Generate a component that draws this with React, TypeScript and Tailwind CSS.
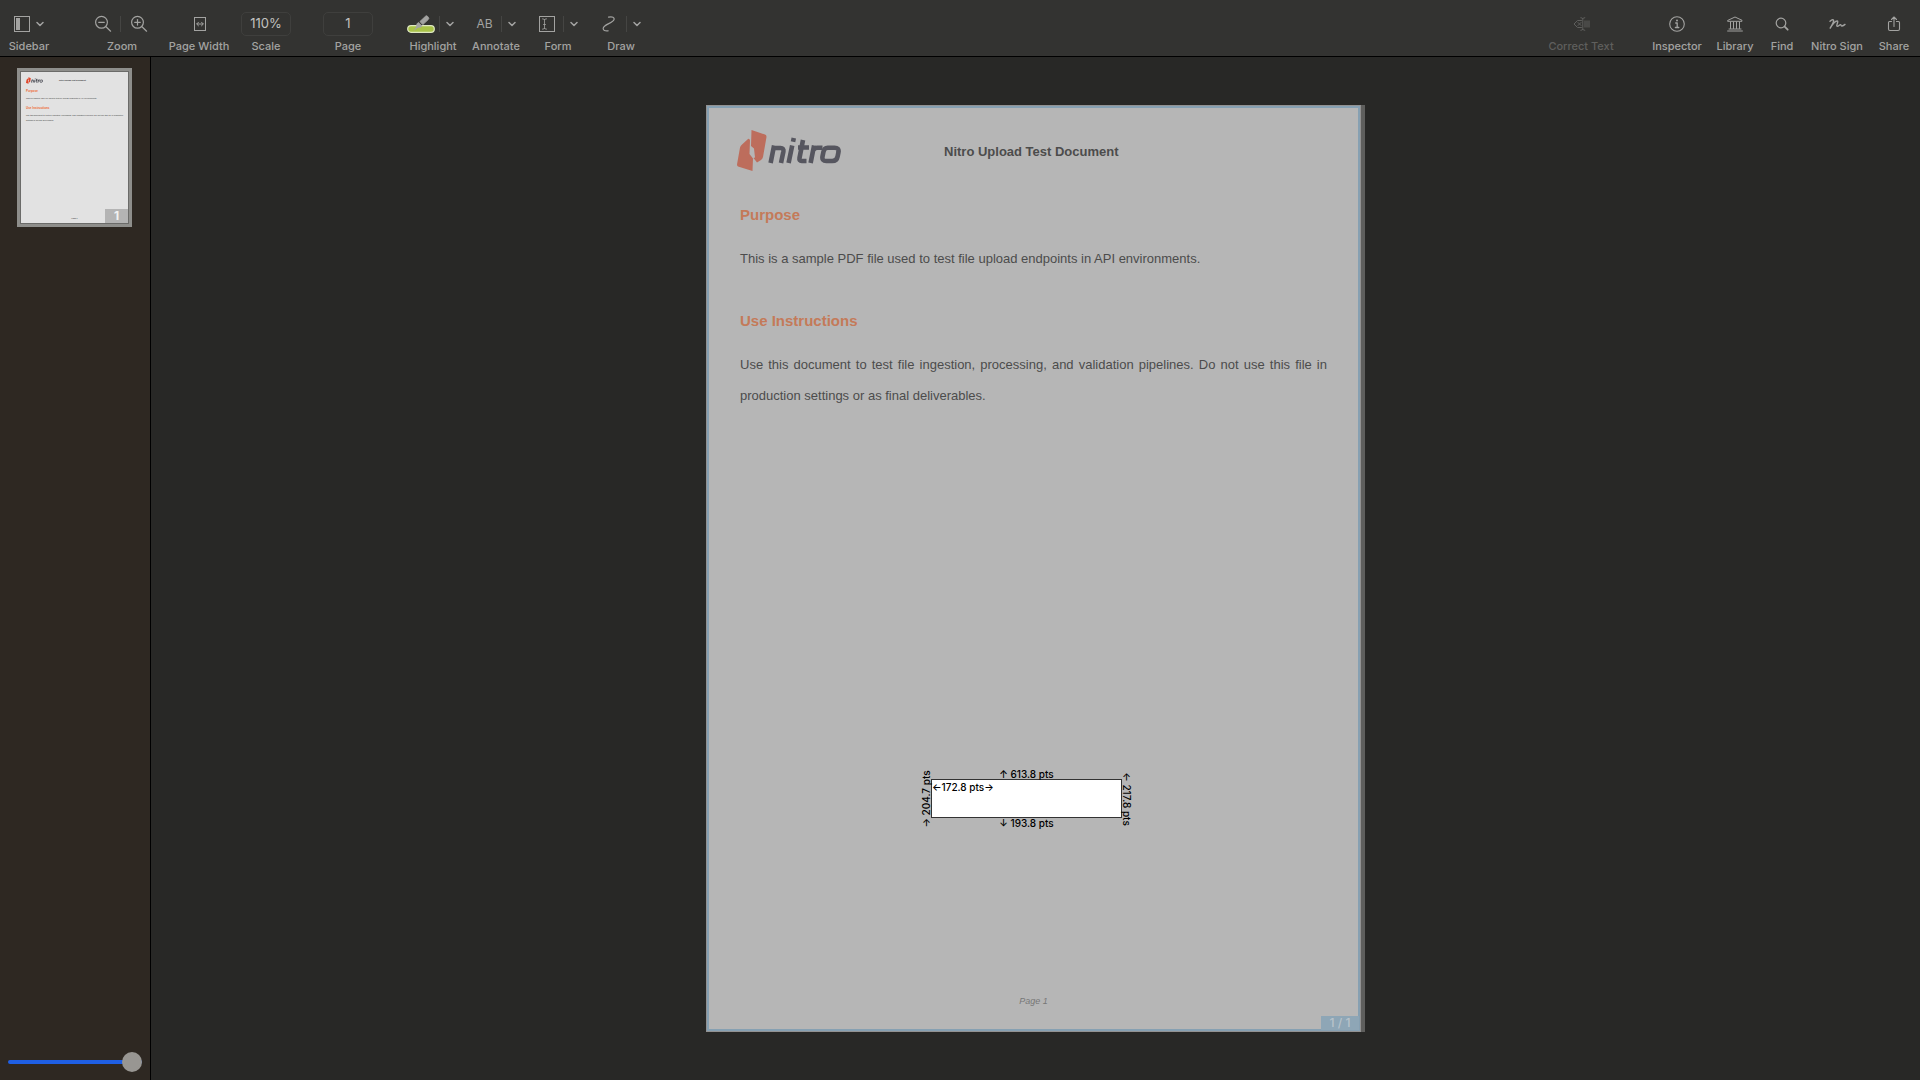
import React from "react";

type ToolProps = { label: string; className: string; children: React.ReactNode; dim?: boolean };

const stroke = {
  fill: "none",
  stroke: "currentColor",
  strokeWidth: 1,
  strokeLinecap: "round" as const,
  strokeLinejoin: "round" as const,
};

function Tool({ label, className, children, dim }: ToolProps) {
  return (
    <div
      role="group"
      aria-label={label}
      className={`flex shrink-0 flex-col items-center gap-1 ${dim ? "text-[#5f5f5d]" : "text-[#a3a3a1]"} ${className}`}
    >
      <div className="flex h-6 items-center justify-center">{children}</div>
      <span className="whitespace-nowrap text-[11px] leading-3 font-medium">{label}</span>
    </div>
  );
}

function IconButton({ label, children, disabled }: { label: string; children: React.ReactNode; disabled?: boolean }) {
  return (
    <button type="button" aria-label={label} disabled={disabled} className="flex items-center justify-center">
      {children}
    </button>
  );
}

function Chevron({ label }: { label: string }) {
  return (
    <IconButton label={label}>
      <svg width="8" height="8" viewBox="0 0 8 8" {...stroke} strokeWidth={1.5}>
        <path d="M1 2.5 4 5.5 7 2.5" />
      </svg>
    </IconButton>
  );
}

function Divider({ className }: { className: string }) {
  return <span className={`h-4 w-px bg-[#454543] ${className}`} />;
}

function ZoomGlyph({ plus }: { plus?: boolean }) {
  return (
    <svg width="18" height="18" viewBox="0 0 18 18" {...stroke} strokeWidth={1.2}>
      <circle cx="7.5" cy="7.3" r="5.9" />
      <path d="M12 11.8 16.6 16.2M4.7 7.3h5.6" />
      {plus && <path d="M7.5 4.5v5.6" />}
    </svg>
  );
}

function NumberBox({ id, label, value }: { id: string; label: string; value: string }) {
  return (
    <div className="flex w-[50px] shrink-0 flex-col items-center gap-1 text-[#a3a3a1]">
      <input
        id={id}
        defaultValue={value}
        className="h-6 w-full rounded-[5px] border border-[#3f3f3d] bg-transparent pb-0.5 text-center text-[13px] text-[#c2c2c0] outline-none"
      />
      <label htmlFor={id} className="text-[11px] leading-3 font-medium">
        {label}
      </label>
    </div>
  );
}

function Toolbar() {
  return (
    <header className="flex h-[57px] shrink-0 items-start justify-between border-b border-black bg-[#333331] pt-3">
      <div className="flex">
        <Tool label="Sidebar" className="w-[58px]">
          <IconButton label="Toggle sidebar">
            <svg width="16" height="16" viewBox="0 0 16 16" {...stroke} strokeLinejoin="miter">
              <rect x="0.5" y="0.5" width="15" height="15" />
              <rect x="2" y="2" width="4" height="12" fill="currentColor" stroke="none" />
            </svg>
          </IconButton>
          <span className="w-1.5" />
          <Chevron label="Sidebar options" />
        </Tool>
        <Tool label="Zoom" className="ml-[34px] w-[60px]">
          <IconButton label="Zoom out">
            <ZoomGlyph />
          </IconButton>
          <Divider className="mr-[9px] ml-2" />
          <IconButton label="Zoom in">
            <ZoomGlyph plus />
          </IconButton>
          <span className="w-0.5" />
        </Tool>
        <Tool label="Page Width" className="ml-3.5 w-[66px]">
          <IconButton label="Fit page width">
            <span className="w-0.5" />
            <svg width="12" height="14" viewBox="0 0 12 14" {...stroke} strokeLinejoin="miter">
              <rect x="0.5" y="0.5" width="11" height="13" />
              <path d="M3 7h6M4.5 5.2 2.7 7l1.8 1.8M7.5 5.2 9.3 7 7.5 8.8" />
            </svg>
          </IconButton>
        </Tool>
        <div className="ml-[9px] flex gap-8">
          <NumberBox id="scale" label="Scale" value="110%" />
          <NumberBox id="page" label="Page" value="1" />
        </div>
        <Tool label="Highlight" className="ml-[33px] w-[54px]">
          <IconButton label="Highlight">
            <svg width="28" height="18" viewBox="0 0 28 18">
              <rect x="0.7" y="10.7" width="26.6" height="6.6" rx="3.3" fill="#a9c348" stroke="#dfe8c0" strokeWidth="1.2" />
              <path d="M13 6.5 18.6 1.2q1-.8 2 .2l.8 1q.8 1-.1 2L15.8 9.6z" fill="#a3a3a1" stroke="#a3a3a1" />
              <path d="M11.500 7 15.500 11 13.500 12.500 11 12.800 6.500 16 9.200 12 9.400 9z" fill="#a3a3a1" />
            </svg>
          </IconButton>
          <Divider className="mr-1.5 ml-1" />
          <Chevron label="Highlight options" />
          <span className="w-1.5" />
        </Tool>
        <Tool label="Annotate" className="ml-2.5 w-[52px]">
          <button type="button" className="text-[12px] leading-4">
            AB
          </button>
          <Divider className="mr-1.5 ml-2" />
          <Chevron label="Annotate options" />
        </Tool>
        <Tool label="Form" className="ml-3 w-12">
          <IconButton label="Form">
            <svg width="16" height="16" viewBox="0 0 16 16" {...stroke} strokeLinejoin="miter">
              <rect x="0.5" y="0.5" width="15" height="15" />
              <path d="M5.5 3.5v9M3.5 2.8q2 0 2 1.2 0-1.2 2-1.2M3.5 13.2q2 0 2-1.2 0 1.2 2 1.2M4.5 8.5h2" strokeWidth={0.8} />
            </svg>
          </IconButton>
          <Divider className="mr-1.5 ml-2" />
          <Chevron label="Form options" />
        </Tool>
        <Tool label="Draw" className="ml-3.5 w-[50px]">
          <IconButton label="Draw">
            <svg width="14" height="16" viewBox="0 0 14 16" {...stroke} strokeWidth={1.2}>
              <path d="M6.5 1.2C10.5.2 12.6 1.6 12 3.6 11 7 1.500 8.500 1.200 12.200c-.2 2.200 2 3.100 5 2.600" />
            </svg>
          </IconButton>
          <Divider className="mr-1.5 ml-2.5" />
          <Chevron label="Draw options" />
        </Tool>
      </div>

      <div className="flex pr-2.5">
        <Tool label="Correct Text" className="mr-[37px] w-[66px]" dim>
          <IconButton label="Correct Text" disabled>
            <span className="w-0.5" />
            <svg width="18" height="14" viewBox="0 0 18 14" {...stroke}>
              <path d="M8.5 3.5H4.5L1 7l3.5 3.5h4M5 5.5 8 8.5M8 5.5l-3 3M7.8.7q2 0 2 1.3 0-1.3 2-1.3M9.8 2v10M7.8 13.3q2 0 2-1.3 0 1.3 2 1.3" />
              <path d="M11 3.5h6v7h-6z" fill="currentColor" fillOpacity={0.5} stroke="none" />
            </svg>
          </IconButton>
        </Tool>
        <Tool label="Inspector" className="mr-[13px] w-[52px]">
          <IconButton label="Inspector">
            <svg width="16" height="16" viewBox="0 0 16 16" {...stroke} strokeWidth={1.1}>
              <circle cx="8" cy="8" r="7.3" />
              <circle cx="8" cy="4.6" r="1" fill="currentColor" stroke="none" />
              <path d="M6.7 7h1.5v4.4M6.4 11.5h3.4" strokeWidth={1.3} />
            </svg>
          </IconButton>
        </Tool>
        <Tool label="Library" className="mr-4 w-[38px]">
          <IconButton label="Library">
            <svg width="16" height="16" viewBox="0 0 16 16" {...stroke}>
              <path d="M1 4.3 8 1l7 3.3v1H1zM3.500 6v6.500M6.500 6v6.500M9.500 6v6.500M12.500 6v6.500M2 13h12M.6 15h14.800" />
            </svg>
          </IconButton>
        </Tool>
        <Tool label="Find" className="mr-4 w-6">
          <IconButton label="Find">
            <svg width="14" height="14" viewBox="0 0 14 14" {...stroke} strokeWidth={1.2}>
              <circle cx="6" cy="6" r="4.8" />
              <path d="m9.7 9.7 3 3" strokeWidth={1.8} />
            </svg>
          </IconButton>
        </Tool>
        <Tool label="Nitro Sign" className="mr-3.5 w-[54px]">
          <IconButton label="Nitro Sign">
            <svg width="18" height="12" viewBox="0 0 18 12" {...stroke} strokeWidth={1.4}>
              <path d="M2 3.2C4 1.4 6 1 5.6 3.2 5.2 5.6 3.4 8 2.2 10.2 4.4 6.4 7.4 2.8 9.2 3c1.8.3-1.4 4.6-.2 5.2C10.4 8.8 11.4 6.4 12.6 6.6c1 .2 0 1.6 1.4 1.4 1-.2 2-.8 3-1.6" />
            </svg>
          </IconButton>
        </Tool>
        <Tool label="Share" className="w-8">
          <IconButton label="Share">
            <svg width="14" height="16" viewBox="0 0 14 16" {...stroke} strokeWidth={1.1}>
              <path d="M4.5 5.5h-2q-1 0-1 1V13q0 1.5 1.5 1.5h8q1.5 0 1.5-1.5V6.5q0-1-1-1h-2M7 10.5V1.2M4.5 3.5 7 1l2.5 2.5" />
            </svg>
          </IconButton>
        </Tool>
      </div>
    </header>
  );
}

function NitroLogo({ className, mark, word }: { className: string; mark: string; word: string }) {
  return (
    <svg viewBox="0 0 104 41" className={className} role="img" aria-label="nitro">
      <path
        fill={mark}
        d="M14.5 0 28 4.500q1.700.7 1.500 2.500L26 27q-.5 2-2 3l-4 2.600L16.500 28 18 27.500 17 18.500 14 16zM11 9q1.700-.6 2 1.500L12.500 24l3.500 4.500-.5 12.500L1 36.500q-1-.5-1-2L3 17.500q.4-1.500 1.500-2.500z"
      />
      <g fill="none" stroke={word} strokeWidth="4.6" strokeLinejoin="round">
        <path d="M33.6 33 37.1 15.5M36.500 18H43.500q3.500 0 2.900 3.500L44 33" />
        <path d="M51.6 33 55.2 15.5M56 11.8 56.8 8" />
        <path d="M66 10 62.5 28q-.5 3 2.2 3H69.5M61 17.500H72" />
        <path d="M73.6 33 77.1 15.5M76.500 20q1-2.200 4-2.200H85.500" />
        <path d="M90.7 17.7H97.5Q102.2 17.7 101.5 22L100.6 26.5Q99.8 31 95.3 31H89.3Q84.7 31 85.5 26.5L86.4 22Q87.2 17.7 90.7 17.7z" />
      </g>
    </svg>
  );
}

function Thumbnail() {
  return (
    <button
      type="button"
      aria-label="Go to page 1"
      className="relative flex h-[159px] w-[115px] flex-col border-3 border-[#8e8e8b] bg-[#e2e2e2] text-left font-['Liberation_Sans',sans-serif] text-[#333] outline outline-1 -outline-offset-4 outline-[#6b6b69]"
    >
      <span className="flex items-center pt-1.5 pl-[6px]">
        <NitroLogo className="h-[7px] w-[17px]" mark="#e0492e" word="#33343f" />
        <span className="ml-4 text-[2px] leading-[3px] font-bold">Nitro Upload Test Document</span>
      </span>
      <span className="mt-[5px] px-[6px] text-[3px] leading-1 font-bold text-[#ee6a32]">Purpose</span>
      <span className="mt-[3px] px-[6px] text-[2px] leading-1">
        This is a sample PDF file used to test file upload endpoints in API environments.
      </span>
      <span className="mt-[6px] px-[6px] text-[3px] leading-1 font-bold text-[#ee6a32]">Use Instructions</span>
      <span className="mt-[3px] px-[6px] text-justify text-[2px] leading-[5px]">
        Use this document to test file ingestion, processing, and validation pipelines. Do not use this file in
        production settings or as final deliverables.
      </span>
      <span className="mt-auto mb-1 w-full text-center text-[2px] leading-1 italic">Page 1</span>
      <span className="absolute right-px bottom-px flex h-3.5 w-[23px] items-center justify-center bg-[#b4b4b4] font-[Inter,sans-serif] text-[12px] font-bold text-[#f2f2f2]">
        1
      </span>
    </button>
  );
}

function Sidebar() {
  return (
    <aside className="flex w-[151px] shrink-0 flex-col items-start justify-between border-r border-black bg-[#2e2822] pt-[11px] pb-2">
      <div className="pl-[17px]">
        <Thumbnail />
      </div>
      <input
        type="range"
        aria-label="Thumbnail size"
        defaultValue={100}
        className="ml-2 h-5 w-[134px] appearance-none bg-transparent [&::-webkit-slider-runnable-track]:h-1 [&::-webkit-slider-runnable-track]:rounded-full [&::-webkit-slider-runnable-track]:bg-[#1f5fe4] [&::-webkit-slider-thumb]:-mt-2 [&::-webkit-slider-thumb]:size-5 [&::-webkit-slider-thumb]:appearance-none [&::-webkit-slider-thumb]:rounded-full [&::-webkit-slider-thumb]:bg-[#989692]"
      />
    </aside>
  );
}

function Selection() {
  return (
    <div className="absolute top-[673px] left-[224px] h-[39px] w-[191px] border border-[#333] bg-white font-[Inter,sans-serif] text-[10px] leading-3 font-medium whitespace-nowrap text-black">
      <span className="absolute top-px left-0">←172.8 pts→</span>
      <span className="absolute bottom-full left-1/2 -translate-x-1/2">↑ 613.8 pts</span>
      <span className="absolute top-full left-1/2 -translate-x-1/2">↓ 193.8 pts</span>
      <span className="absolute top-1/2 right-full -translate-y-1/2 rotate-180 [writing-mode:vertical-rl]">→ 204.7 pts</span>
      <span className="absolute top-1/2 left-full -translate-y-1/2 [writing-mode:vertical-rl]">← 217.8 pts</span>
    </div>
  );
}

function DocumentPage() {
  return (
    <div className="my-12 flex min-h-[927px] w-[659px] border-r-4 border-[#5f5f5d]">
      <article className="relative flex w-full flex-col border border-[#929292] bg-[#b6b6b6] font-['Liberation_Sans',sans-serif] text-[#4c4c4c] outline outline-2 -outline-offset-3 outline-[#86a0b2]">
        <div className="flex items-start pt-6 pl-[30px]">
          <NitroLogo className="h-[41px] w-[104px]" mark="#bd6d5c" word="#56565f" />
          <h1 className="mt-[14px] ml-[103px] text-[13px] leading-4 font-bold">Nitro Upload Test Document</h1>
        </div>
        <section className="px-[33px] pt-[34px]">
          <h2 className="text-[15px] leading-5 font-bold text-[#c47a59]">Purpose</h2>
          <p className="mt-[18px] text-[13px] leading-[31px]">
            This is a sample PDF file used to test file upload endpoints in API environments.
          </p>
        </section>
        <section className="px-[33px] pt-[37px]">
          <h2 className="text-[15px] leading-5 font-bold text-[#c47a59]">Use Instructions</h2>
          <p className="mt-[18px] text-justify text-[13px] leading-[31px]">
            Use this document to test file ingestion, processing, and validation pipelines. Do not use this file in
            production settings or as final deliverables.
          </p>
        </section>
        <footer className="mt-auto mb-6 text-center text-[9px] leading-3 text-[#777] italic">Page 1</footer>
        <Selection />
        <span className="absolute right-px bottom-px flex h-3.5 w-[38px] items-center justify-center bg-[#8ea6b6] font-[Inter,sans-serif] text-[12px] font-medium text-[#b9c3ca]">
          1 / 1
        </span>
      </article>
    </div>
  );
}

export default function App() {
  return (
    <div className="flex min-h-screen flex-col bg-[#282826] font-[Inter,sans-serif]">
      <Toolbar />
      <div className="flex grow">
        <Sidebar />
        <main className="flex grow items-start justify-center">
          <DocumentPage />
        </main>
      </div>
    </div>
  );
}
